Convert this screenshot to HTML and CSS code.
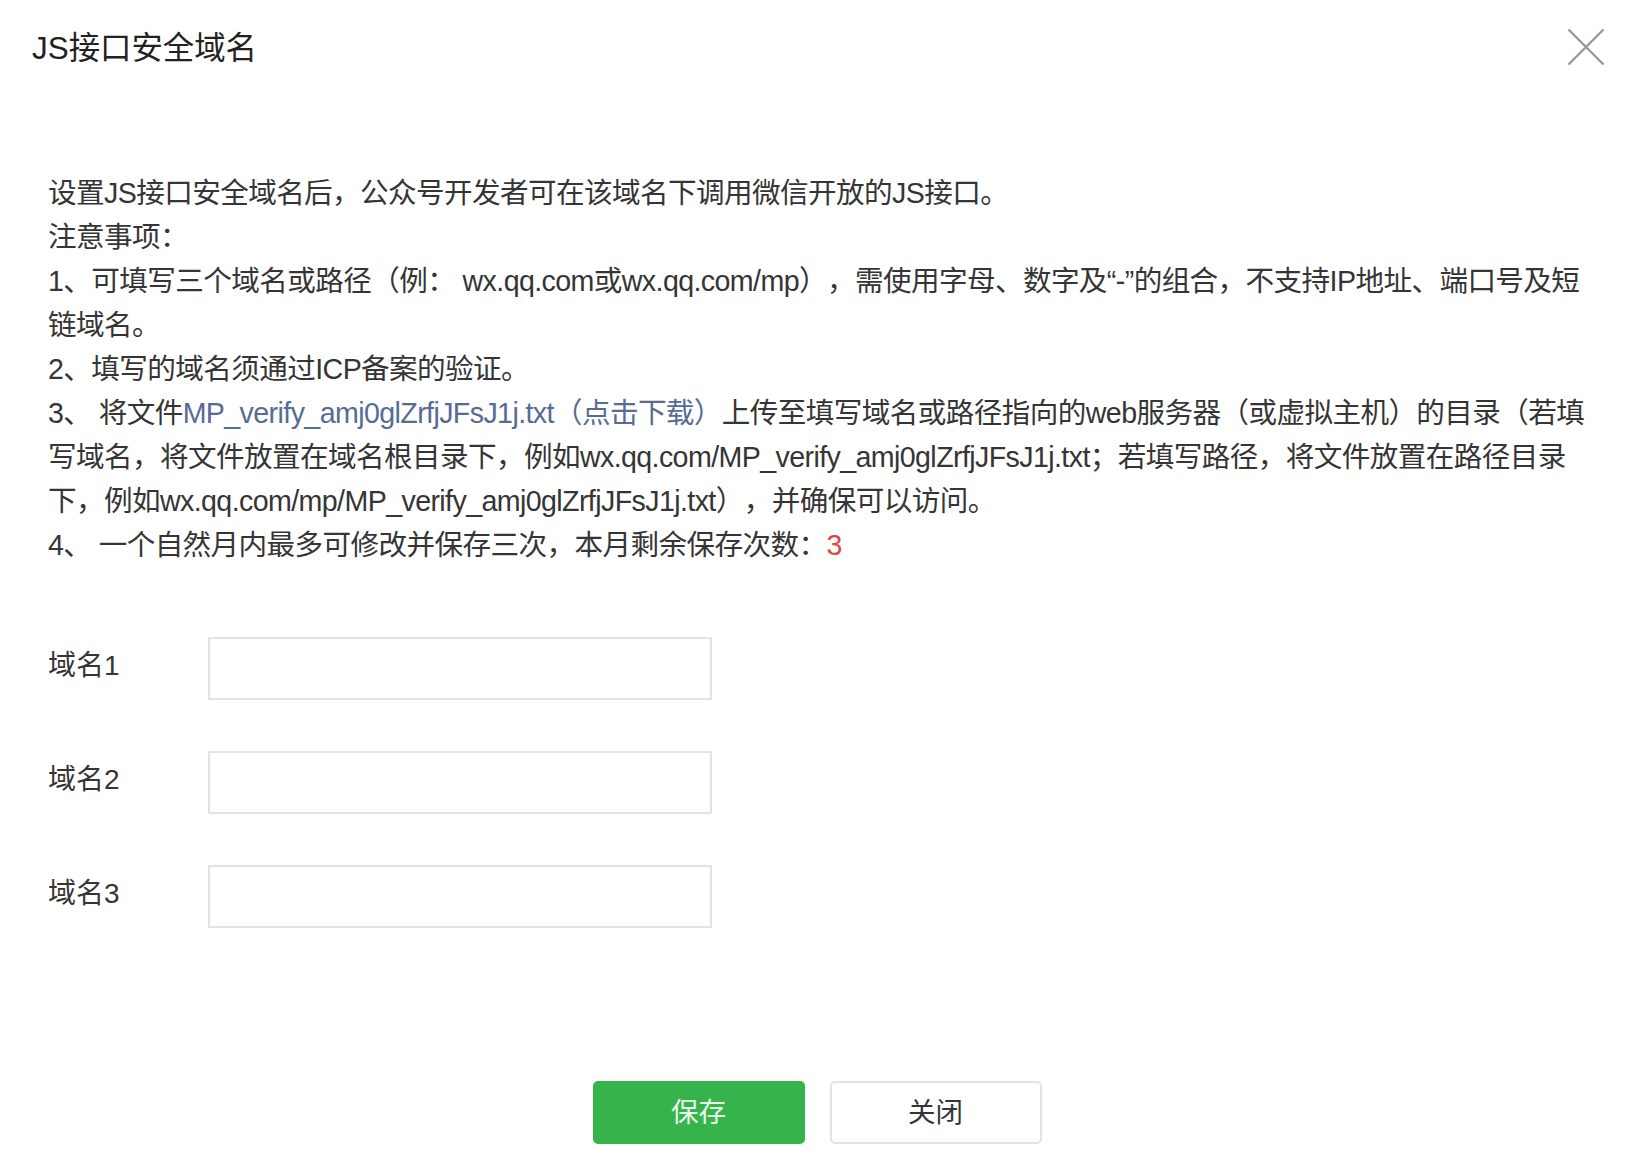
FILE: index.html
```html
<!DOCTYPE html>
<html lang="zh-CN">
<head>
<meta charset="utf-8">
<title>JS接口安全域名</title>
<link rel="stylesheet" href="styles.css">
</head>
<body>
<div class="dialog">
  <div class="dialog-hd">
    <h3 class="dialog-title">JS接口安全域名</h3>
    <a class="dialog-close" href="#" aria-label="关闭">
      <svg width="38" height="38" viewBox="0 0 38 38"><path d="M1.5 1.5 L36.5 36.5 M36.5 1.5 L1.5 36.5" stroke="#999" stroke-width="2.4" fill="none"/></svg>
    </a>
  </div>
  <div class="dialog-bd">
    <div class="desc">
      <p class="line">设置JS接口安全域名后，公众号开发者可在该域名下调用微信开放的JS接口。</p>
      <p class="line">注意事项：</p>
      <p class="line">1、可填写三个域名或路径（例： wx.qq.com或wx.qq.com/mp），需使用字母、数字及“-”的组合，不支持IP地址、端口号及短<br>链域名。</p>
      <p class="line">2、填写的域名须通过ICP备案的验证。</p>
      <p class="line">3、 将文件<a class="link" href="#">MP_verify_amj0glZrfjJFsJ1j.txt（点击下载）</a>上传至填写域名或路径指向的web服务器（或虚拟主机）的目录（若填<br>写域名，将文件放置在域名根目录下，例如wx.qq.com/MP_verify_amj0glZrfjJFsJ1j.txt；若填写路径，将文件放置在路径目录<br>下，例如wx.qq.com/mp/MP_verify_amj0glZrfjJFsJ1j.txt），并确保可以访问。</p>
      <p class="line">4、 一个自然月内最多可修改并保存三次，本月剩余保存次数：<span class="warn">3</span></p>
    </div>
    <div class="form">
      <div class="form-row">
        <label class="form-label">域名1</label>
        <input class="form-input" type="text">
      </div>
      <div class="form-row">
        <label class="form-label">域名2</label>
        <input class="form-input" type="text">
      </div>
      <div class="form-row">
        <label class="form-label">域名3</label>
        <input class="form-input" type="text">
      </div>
    </div>
  </div>
  <div class="dialog-ft">
    <button class="btn btn-primary" type="button">保存</button>
    <button class="btn btn-default" type="button">关闭</button>
  </div>
</div>
</body>
</html>
```

FILE: styles.css
```css
html, body {
  margin: 0;
  padding: 0;
  background: #fff;
}
body {
  font-family: "Liberation Sans", "Noto Sans CJK SC", sans-serif;
  color: #353535;
  font-size: 28px;
  text-spacing-trim: space-all;
}
.dialog {
  width: 1634px;
}
.dialog-hd {
  display: flex;
  justify-content: space-between;
  align-items: center;
  padding: 27px 29px 0 32px;
  height: 44px;
}
.dialog-title {
  margin: 0;
  font-size: 31.4px;
  font-weight: normal;
  line-height: 44px;
  color: #222;
}
.dialog-close {
  display: flex;
  margin-top: -4px;
}
.dialog-bd {
  padding: 0 48px;
}
.desc {
  margin-top: 100px;
  font-size: 28.6px;
  letter-spacing: -0.6px;
}
.line {
  margin: 0;
  line-height: 44px;
  white-space: nowrap;
}
.link {
  color: #576b95;
  text-decoration: none;
}
.warn {
  color: #e64340;
}
.form {
  margin-top: 70px;
  display: flex;
  flex-direction: column;
  gap: 51px;
}
.form-row {
  display: flex;
  align-items: center;
  height: 63px;
}
.form-label {
  width: 160px;
  flex: none;
  line-height: 44px;
  padding-bottom: 6px;
}
.form-input {
  box-sizing: border-box;
  width: 504px;
  height: 63px;
  border: 2px solid #e3e3e3;
  border-radius: 0;
  padding: 0 16px;
  font: inherit;
  outline: none;
  background: #fff;
}
.dialog-ft {
  display: flex;
  justify-content: center;
  gap: 25px;
  margin-top: 153px;
}
.btn {
  box-sizing: border-box;
  width: 212px;
  height: 63px;
  border-radius: 5px;
  font-family: inherit;
  font-size: 27.5px;
  line-height: 44px;
  padding: 0;
  cursor: pointer;
}
.btn-primary {
  background: #36b44b;
  border: 2px solid #36b44b;
  color: #eaf7ec;
}
.btn-default {
  background: #fff;
  border: 2px solid #e3e3e3;
  color: #353535;
}
```
